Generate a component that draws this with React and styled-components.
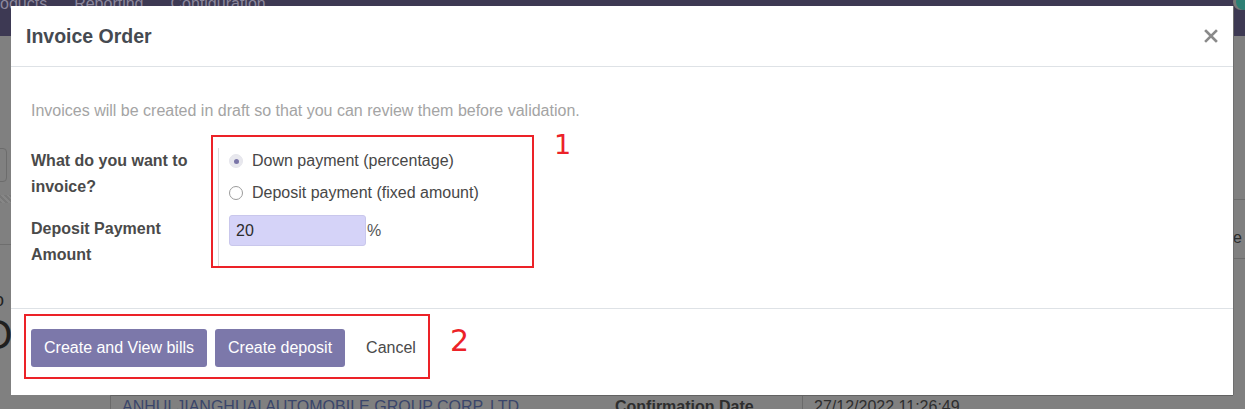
import React from "react";
import styled, { createGlobalStyle } from "styled-components";

const GlobalStyle = createGlobalStyle`
  html, body { margin: 0; padding: 0; }
  body { font-family: "Liberation Sans", Arial, sans-serif; background: #808080; }
  * { box-sizing: border-box; }
`;

const Page = styled.div`
  position: relative;
  width: 1245px;
  height: 409px;
  overflow: hidden;
  background: #808080;
  display: flex;
  flex-direction: column;
`;

const NavBar = styled.div`
  height: 36px;
  flex: none;
  background: #3d3953;
  display: flex;
  align-items: flex-start;
  gap: 27px;
  color: #8c889d;
  font-size: 16px;
  line-height: 18px;
`;

const NavItem = styled.span`
  margin-top: -5px;
  margin-left: ${(p) => p.$shift || 0}px;
`;

const NavSpacer = styled.div`flex: 1;`;

const Avatar = styled.span`
  width: 16px;
  height: 16px;
  margin-top: -6px;
  margin-right: -7px;
  border-radius: 50%;
  background: #2d7f74;
  box-shadow: -3px 0 0 0 #777;
`;

const BackBody = styled.div`
  flex: 1;
  display: flex;
`;

const BackMain = styled.div`
  flex: 1;
  display: flex;
  flex-direction: column;
`;

const BackSide = styled.div`
  width: 12px;
  display: flex;
  flex-direction: column;
  color: #2b2b2b;
  font-size: 16px;
`;

const SideLine = styled.div`
  height: 1px;
  background: #6d6d6d;
  margin-top: ${(p) => p.$top}px;
`;

const SideText = styled.span`
  margin-top: ${(p) => p.$top}px;
  margin-left: -8px;
  line-height: 18px;
`;

const GhostInput = styled.div`
  margin-top: 112px;
  margin-left: -50px;
  width: 57px;
  height: 34px;
  border: 1px solid #6c6c6c;
  border-radius: 4px;
`;

const Checker = styled.div`
  margin-top: 13px;
  height: 8px;
  width: 12px;
  background-image: repeating-linear-gradient(45deg, #787878 0 2px, #868686 2px 4px);
`;

const GhostRule = styled.div`
  margin-top: 41px;
  height: 1px;
  width: 12px;
  background: #6e6e6e;
`;

const GhostSmall = styled.span`
  margin-top: 46px;
  margin-left: -6px;
  font-size: 18px;
  line-height: 18px;
  color: #222;
`;

const GhostBig = styled.span`
  margin-top: 4px;
  margin-left: -20px;
  font-size: 42px;
  line-height: 44px;
  color: #1f1f1f;
`;

const InfoRow = styled.div`
  margin-top: auto;
  margin-left: 110px;
  height: 14px;
  border-top: 1px solid #626262;
  border-left: 1px solid #6a6a6a;
  display: flex;
  font-size: 16px;
  line-height: 22px;
  overflow: hidden;
`;

const InfoValue = styled.span`
  padding-left: 11px;
  width: ${(p) => p.$w}px;
  flex: none;
  white-space: nowrap;
  color: ${(p) => p.$color || "#2e2e2e"};
  font-weight: ${(p) => (p.$bold ? 700 : 400)};
  border-right: ${(p) => (p.$divider ? "1px solid #6a6a6a" : "none")};
`;

/* ---------- Dialog ---------- */

const Dialog = styled.div`
  position: absolute;
  top: 6px;
  left: 11px;
  width: 1222px;
  height: 389px;
  background: #fff;
  display: flex;
  flex-direction: column;
  box-shadow: 1px 0 0 #6f6f6f;
`;

const Header = styled.div`
  height: 61px;
  flex: none;
  display: flex;
  align-items: center;
  justify-content: space-between;
  padding: 0 15px 0 15px;
  border-bottom: 1px solid #dee2e6;
`;

const Title = styled.h4`
  margin: 0;
  font-size: 19.5px;
  font-weight: 700;
  color: #454a51;
`;

const CloseButton = styled.button`
  border: 0;
  background: none;
  padding: 0;
  width: 14px;
  height: 14px;
  display: flex;
  cursor: pointer;
`;

const Body = styled.div`
  flex: 1;
  padding: 34px 20px 0;
`;

const Note = styled.p`
  margin: 0;
  font-size: 16px;
  line-height: 19px;
  color: #a4a4a4;
`;

const FormGrid = styled.div`
  margin-top: 28px;
  display: grid;
  grid-template-columns: 187px auto;
  justify-content: start;
`;

const Label = styled.div`
  font-weight: 700;
  font-size: 16px;
  line-height: 25.5px;
  color: #4a4a4a;
  padding-top: ${(p) => p.$pt || 0}px;
`;

const FieldCell = styled.div`
  border-left: 1px solid #dcdcdc;
  padding-left: 10px;
  padding-top: ${(p) => p.$pt || 0}px;
  padding-bottom: ${(p) => p.$pb || 0}px;
  display: flex;
  flex-direction: ${(p) => (p.$row ? "row" : "column")};
  align-items: ${(p) => (p.$row ? "flex-start" : "stretch")};
  gap: ${(p) => p.$gap || 0}px;
`;

const RadioRow = styled.label`
  display: flex;
  align-items: center;
  gap: 9px;
  height: 26px;
  font-size: 16px;
  color: #474747;
`;

const RadioDot = styled.span`
  width: 14px;
  height: 14px;
  border-radius: 50%;
  flex: none;
  border: 1px solid ${(p) => (p.$checked ? "#e6e6ec" : "#9b9b9b")};
  background: ${(p) => (p.$checked ? "#e8e8ee" : "#fff")};
  display: flex;
  align-items: center;
  justify-content: center;
  &::after {
    content: "";
    width: 5px;
    height: 5px;
    border-radius: 50%;
    background: ${(p) => (p.$checked ? "#7a75a8" : "transparent")};
  }
`;

const AmountInput = styled.div`
  width: 137px;
  height: 31px;
  background: #d5d3f8;
  border: 1px solid #c9c7ec;
  border-radius: 3px;
  padding: 0 6px;
  font-size: 16px;
  line-height: 30px;
  color: #2c2c2c;
`;

const Unit = styled.span`
  font-size: 16px;
  line-height: 32px;
  color: #555;
  margin-left: 1px;
`;

const Footer = styled.div`
  height: 87px;
  flex: none;
  border-top: 1px solid #dee2e6;
  padding: 20px 20px 0;
  display: flex;
  align-items: flex-start;
  gap: 8px;
`;

const Button = styled.button`
  height: 38px;
  padding: 0 13px;
  border: 0;
  border-radius: 3px;
  font-family: inherit;
  font-size: 16px;
  color: ${(p) => (p.$primary ? "#fff" : "#4a4a4a")};
  background: ${(p) => (p.$primary ? "#7c78aa" : "transparent")};
  cursor: pointer;
`;

const Annotation = styled.div`
  position: absolute;
  left: ${(p) => p.$x}px;
  top: ${(p) => p.$y}px;
  width: ${(p) => p.$w}px;
  height: ${(p) => p.$h}px;
  border: 2px solid #ec2228;
`;

const AnnotationNumber = styled.span`
  position: absolute;
  left: ${(p) => p.$x}px;
  top: ${(p) => p.$y}px;
  font-family: "DejaVu Sans", sans-serif;
  font-size: ${(p) => p.$size}px;
  line-height: 1;
  color: #ec2228;
`;

export default function App() {
  return (
    <>
      <GlobalStyle />
      <Page>
        <NavBar>
          <NavItem $shift={-16}>Products</NavItem>
          <NavItem>Reporting</NavItem>
          <NavItem>Configuration</NavItem>
          <NavSpacer />
          <Avatar />
        </NavBar>
        <BackBody>
          <BackMain>
            <GhostInput />
            <Checker />
            <GhostRule />
            <GhostSmall>o</GhostSmall>
            <GhostBig>O</GhostBig>
            <InfoRow>
              <InfoValue $w={493} $color="#3a466b">ANHUI JIANGHUAI AUTOMOBILE GROUP CORP.,LTD</InfoValue>
              <InfoValue $w={199} $bold $divider>Confirmation Date</InfoValue>
              <InfoValue $w={300}>27/12/2022 11:26:49</InfoValue>
            </InfoRow>
          </BackMain>
          <BackSide>
            <SideLine $top={163} />
            <SideText $top={29}>ce</SideText>
            <SideLine $top={11} />
          </BackSide>
        </BackBody>

        <Dialog>
          <Header>
            <Title>Invoice Order</Title>
            <CloseButton aria-label="Close">
              <svg width="14" height="14" viewBox="0 0 14 14">
                <path d="M2 2 L12 12 M12 2 L2 12" stroke="#8a8a8a" strokeWidth="2.6" strokeLinecap="square" />
              </svg>
            </CloseButton>
          </Header>
          <Body>
            <Note>Invoices will be created in draft so that you can review them before validation.</Note>
            <FormGrid>
              <Label>What do you want to<br />invoice?</Label>
              <FieldCell $gap={6} $pb={7}>
                <RadioRow><RadioDot $checked />Down payment (percentage)</RadioRow>
                <RadioRow><RadioDot />Deposit payment (fixed amount)</RadioRow>
              </FieldCell>
              <Label $pt={3}>Deposit Payment<br />Amount</Label>
              <FieldCell $row $pt={2} $pb={18}>
                <AmountInput>20</AmountInput>
                <Unit>%</Unit>
              </FieldCell>
            </FormGrid>
          </Body>
          <Footer>
            <Button $primary>Create and View bills</Button>
            <Button $primary>Create deposit</Button>
            <Button>Cancel</Button>
          </Footer>
          <Annotation $x={200} $y={129} $w={323} $h={133} />
          <AnnotationNumber $x={543} $y={125} $size={27}>1</AnnotationNumber>
          <Annotation $x={13} $y={308} $w={406} $h={65} />
          <AnnotationNumber $x={439} $y={320} $size={30}>2</AnnotationNumber>
        </Dialog>
      </Page>
    </>
  );
}
